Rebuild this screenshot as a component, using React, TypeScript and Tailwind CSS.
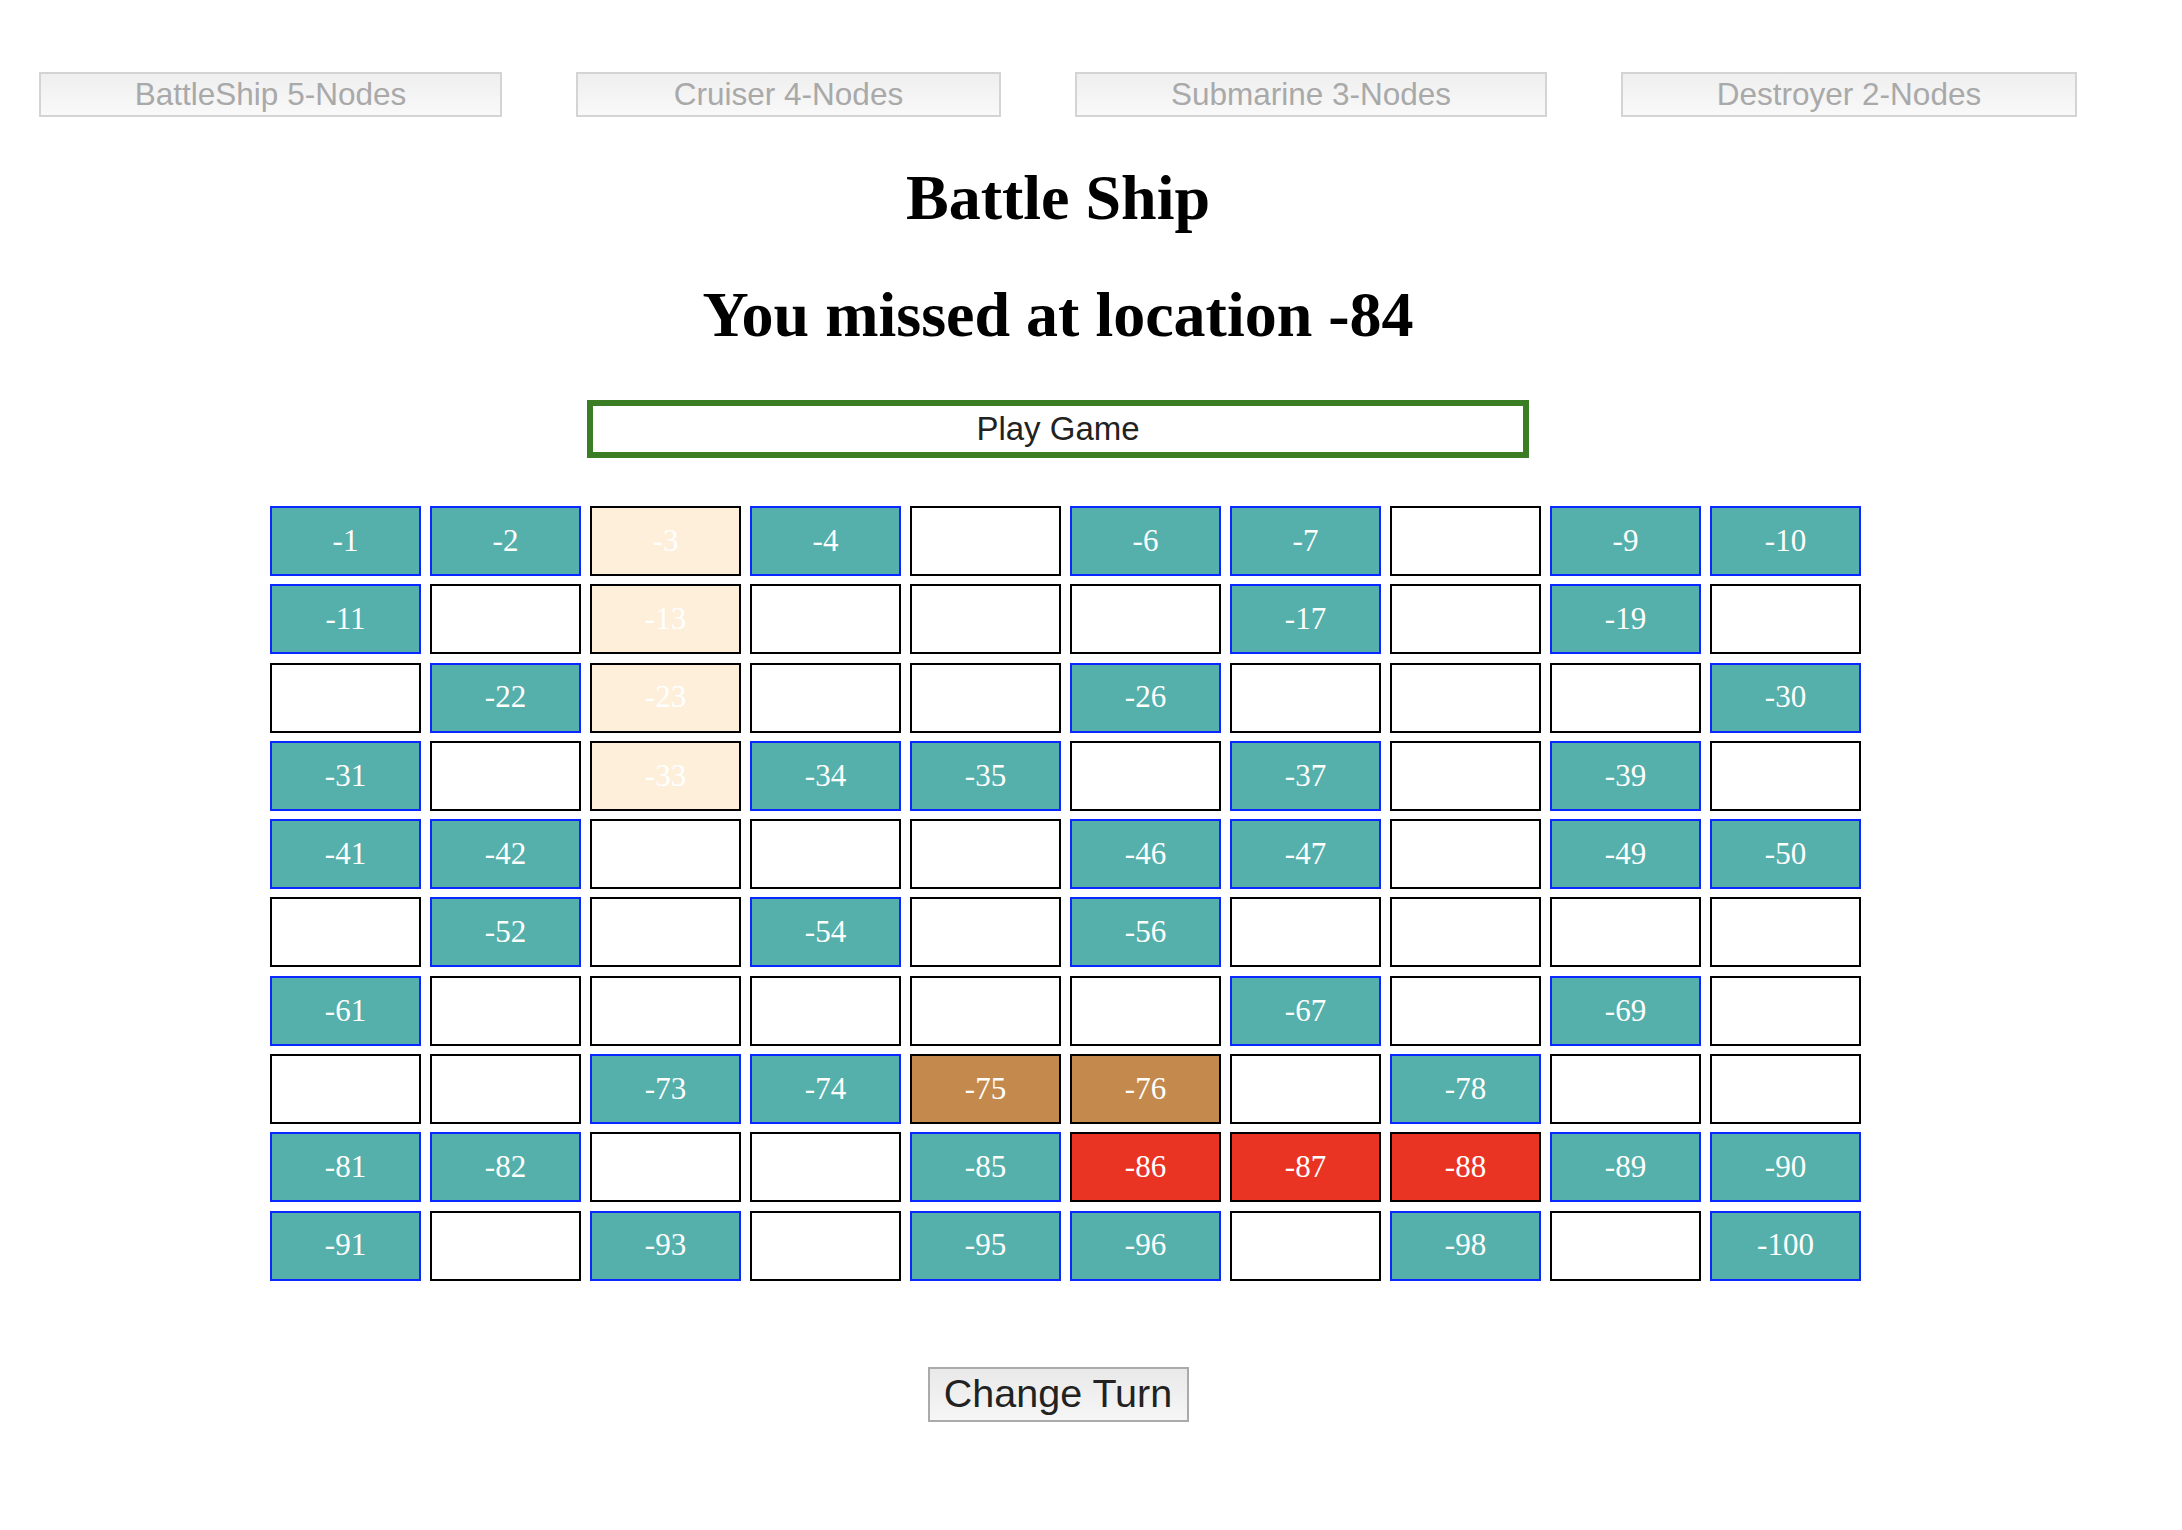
import React from "react";

type Kind = "t" | "w" | "b" | "br" | "r";

const rows: [Kind, number][][] = [];
const layout: string[] = [
  "t t b t w t t w t t",
  "t w b w w w t w t w",
  "w t b w w t w w w t",
  "t w b t t w t w t w",
  "t t w w w t t w t t",
  "w t w t w t w w w w",
  "t w w w w w t w t w",
  "w w t t br br w t w w",
  "t t w w t r r r t t",
  "t w t w t t w t w t",
];
layout.forEach((line, ri) => {
  rows.push(
    line.split(" ").map((k, ci) => [k as Kind, ri * 10 + ci + 1])
  );
});

function Cell({ kind, n }: { kind: Kind; n: number }) {
  let cls = "border-black bg-white";
  if (kind === "t") cls = "border-[#0a28ff] bg-[#55b0ab]";
  if (kind === "b") cls = "border-black bg-[#feefdb]";
  if (kind === "br") cls = "border-black bg-[#c4894d]";
  if (kind === "r") cls = "border-black bg-[#e93424]";
  return (
    <div
      className={`w-[151px] h-[70px] border-2 ${cls} flex items-center justify-center text-white text-[31px]`}
      style={{ fontFamily: '"Liberation Serif", "Times New Roman", serif' }}
    >
      {kind === "w" ? "" : `-${n}`}
    </div>
  );
}

const topBtn =
  "h-[45px] border-2 border-[#d4d4d4] bg-gradient-to-b from-[#efefef] to-[#f9f9f9] text-[#a9a9a9] text-[31.5px] leading-none flex items-center justify-center";

export default function App() {
  return (
    <div
      className="w-[2182px] min-h-[1530px] bg-white"
      style={{ fontFamily: '"Liberation Sans", Arial, sans-serif' }}
    >
      <div className="pt-[72px] pl-[39px] flex gap-[74px]">
        <div className={`${topBtn} w-[463px]`}>BattleShip 5-Nodes</div>
        <div className={`${topBtn} w-[425px]`}>Cruiser 4-Nodes</div>
        <div className={`${topBtn} w-[472px]`}>Submarine 3-Nodes</div>
        <div className={`${topBtn} w-[456px]`}>Destroyer 2-Nodes</div>
      </div>
      <div className="w-[2116px] flex flex-col items-center">
        <h1
          className="mt-[45px] text-[64px] leading-[72px] font-bold text-black"
          style={{ fontFamily: '"Liberation Serif", "Times New Roman", serif' }}
        >
          Battle Ship
        </h1>
        <h1
          className="mt-[45px] text-[64px] leading-[72px] font-bold text-black"
          style={{ fontFamily: '"Liberation Serif", "Times New Roman", serif' }}
        >
          You missed at location -84
        </h1>
        <div className="mt-[49px] w-[942px] h-[58px] border-[6px] border-[#3a7d22] bg-white flex items-center justify-center text-[33px] text-[#222]">
          Play Game
        </div>
        <div className="mt-[48px] self-start ml-[270px] flex flex-col gap-[8.3px]">
          {rows.map((row, ri) => (
            <div key={ri} className="flex gap-[9px]">
              {row.map(([k, n]) => (
                <Cell key={n} kind={k} n={n} />
              ))}
            </div>
          ))}
        </div>
        <div className="mt-[86px] w-[261px] h-[55px] border-2 border-[#aaaaaa] bg-gradient-to-b from-[#e9e9e9] to-[#f6f6f6] flex items-center justify-center text-[39.5px] text-[#222] leading-none">
          Change Turn
        </div>
      </div>
    </div>
  );
}
